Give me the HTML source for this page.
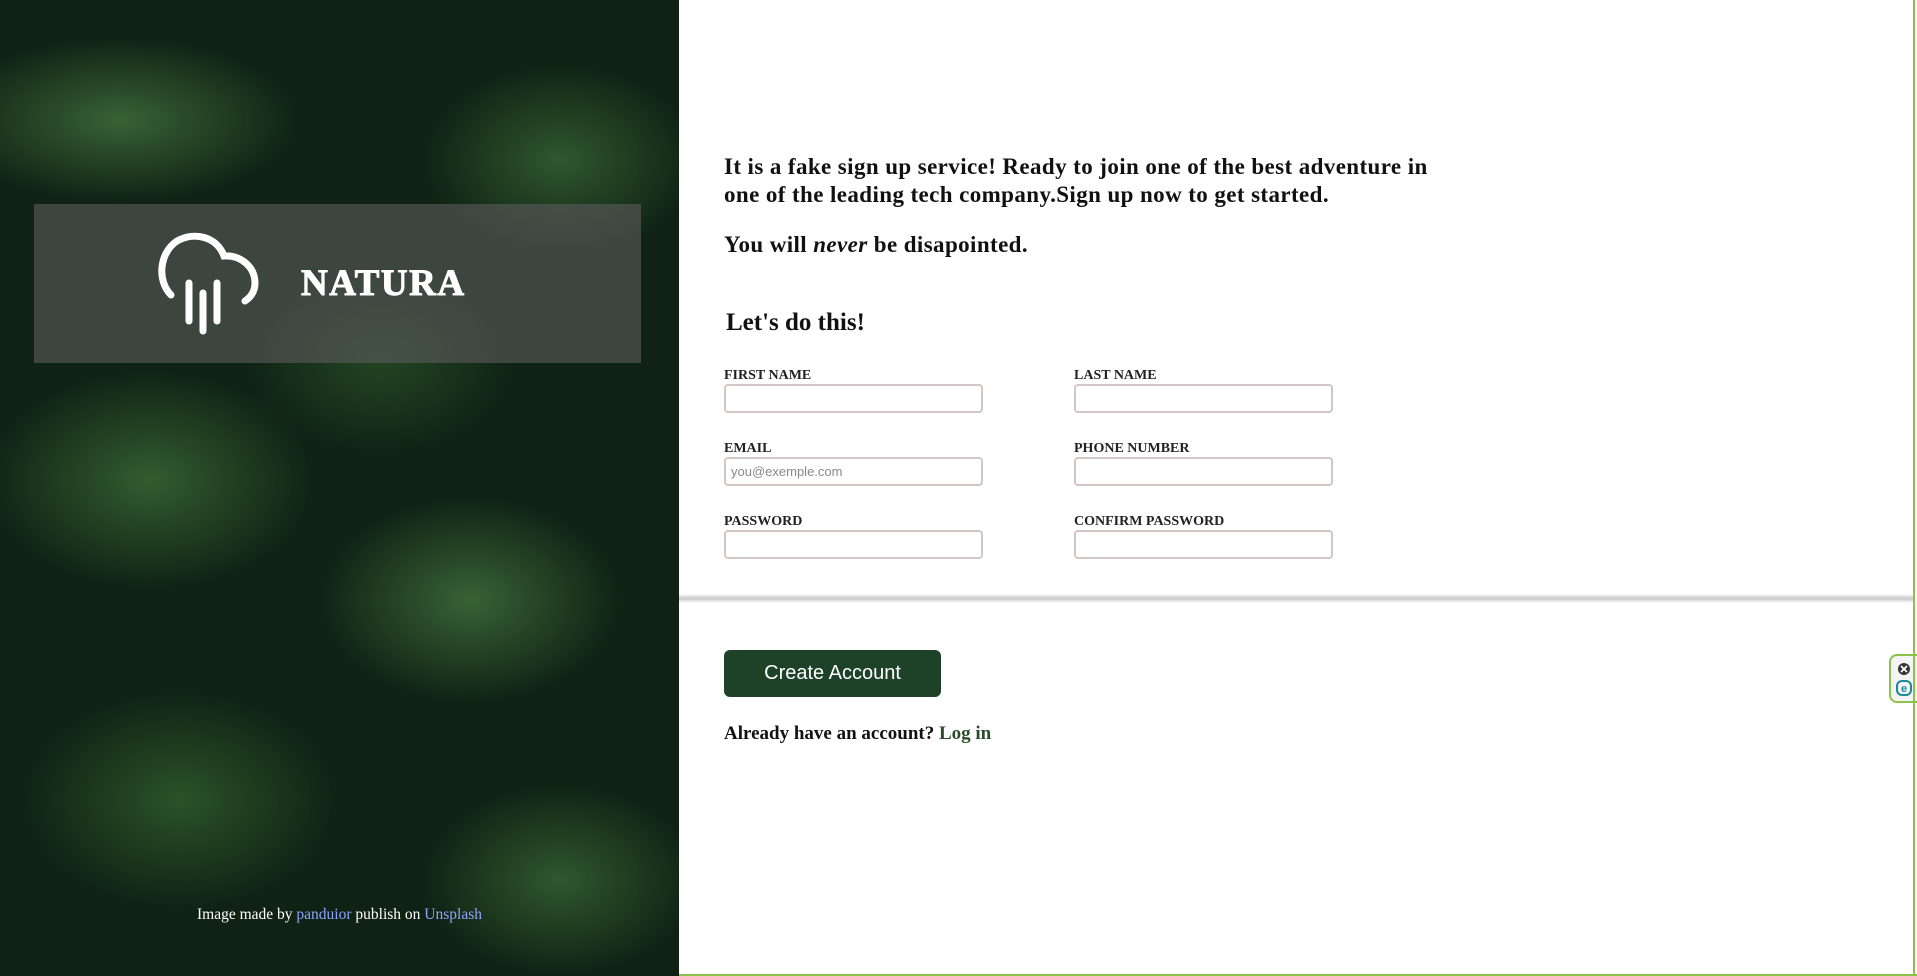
<!DOCTYPE html>
<html><head><meta charset="utf-8"><style>
*{margin:0;padding:0;box-sizing:border-box}
html,body{width:1917px;height:976px;overflow:hidden;background:#fff;font-family:"Liberation Serif",serif}
.left{position:absolute;left:0;top:0;width:679px;height:976px;
background:
radial-gradient(ellipse 260px 120px at 120px 120px,rgba(90,150,80,.55),transparent 70%),
radial-gradient(ellipse 200px 140px at 560px 160px,rgba(80,140,70,.5),transparent 70%),
radial-gradient(ellipse 240px 160px at 150px 480px,rgba(80,140,70,.55),transparent 70%),
radial-gradient(ellipse 220px 150px at 470px 600px,rgba(90,150,80,.55),transparent 70%),
radial-gradient(ellipse 230px 160px at 180px 800px,rgba(70,130,60,.5),transparent 70%),
radial-gradient(ellipse 200px 140px at 560px 880px,rgba(80,140,70,.5),transparent 70%),
radial-gradient(ellipse 200px 140px at 380px 360px,rgba(60,110,55,.45),transparent 70%),
#0f2214;}
.logo{position:absolute;left:34px;top:204px;width:607px;height:159px;background:rgba(90,90,90,.62)}
.nat{position:absolute;left:267px;top:58px;color:#fff;font:bold 37px "Liberation Serif",serif;letter-spacing:1.5px;-webkit-text-stroke:1px #fff}
.credit{position:absolute;left:0;width:679px;top:906px;text-align:center;color:#fff;font-size:15.5px}
.credit a{color:#8fa4ff;text-decoration:none}
.border-r{position:absolute;left:1913px;top:0;width:2px;height:976px;background:#8bc34a}
.border-b{position:absolute;left:679px;top:974px;width:1238px;height:2px;background:#8bc34a}
.intro{position:absolute;left:724px;top:153px;font-weight:bold;font-size:23px;line-height:28px;color:#111;letter-spacing:.4px}
.never{position:absolute;left:724px;top:232px;font-weight:bold;font-size:23px;color:#111;letter-spacing:.4px}
h2{position:absolute;left:726px;top:309px;font-size:25px;font-weight:bold;color:#111}
label{position:absolute;font-size:14px;font-weight:bold;color:#222}
.in{position:absolute;width:259px;height:29px;border:2px solid #d2c6c6;border-radius:4px;background:#fff;font:13px "Liberation Sans",sans-serif;color:#888;padding:5px 5px}
.shadow{position:absolute;left:679px;top:594px;width:1234px;height:9px;background:linear-gradient(#fff,#c8c8c8 50%,#fff)}
.btn{position:absolute;left:724px;top:650px;width:217px;height:47px;background:#1e4228;border-radius:6px;color:#fff;font:20px "Liberation Sans",sans-serif;text-align:center;line-height:47px}
.already{position:absolute;left:724px;top:723px;font-weight:bold;font-size:19px;color:#111}
.already span{color:#2b4d2b}
.wid{position:absolute;left:1889px;top:654px;width:28px;height:49px;border:2px solid #8bc34a;border-right:none;border-radius:8px 0 0 8px;background:#f4f4f4}
</style></head><body>
<div class="left">
 <div class="logo">
  <svg style="position:absolute;left:123px;top:27px" width="104" height="106" viewBox="0 0 104 106">
   <path d="M14 64 C0 50 2 22 20 10 C38 0 60 6 67 25 C84 24 98 36 98 52 C98 60 94 66 88 70" fill="none" stroke="#fff" stroke-width="7" stroke-linecap="round"/>
   <line x1="32" y1="52" x2="32" y2="90" stroke="#fff" stroke-width="7" stroke-linecap="round"/>
   <line x1="46" y1="62" x2="46" y2="100" stroke="#fff" stroke-width="7" stroke-linecap="round"/>
   <line x1="60" y1="52" x2="60" y2="90" stroke="#fff" stroke-width="7" stroke-linecap="round"/>
  </svg>
  <div class="nat">NATURA</div>
 </div>
 <div class="credit">Image made by <a>panduior</a> publish on <a>Unsplash</a></div>
</div>
<div class="intro">It is a fake sign up service! Ready to join one of the best adventure in<br>one of the leading tech company.Sign up now to get started.</div>
<div class="never">You will <i>never</i> be disapointed.</div>
<h2>Let's do this!</h2>
<label style="left:724px;top:368px">FIRST NAME</label>
<div class="in" style="left:724px;top:384px"></div>
<label style="left:1074px;top:368px">LAST NAME</label>
<div class="in" style="left:1074px;top:384px"></div>
<label style="left:724px;top:441px">EMAIL</label>
<div class="in" style="left:724px;top:457px">you@exemple.com</div>
<label style="left:1074px;top:441px">PHONE NUMBER</label>
<div class="in" style="left:1074px;top:457px"></div>
<label style="left:724px;top:514px">PASSWORD</label>
<div class="in" style="left:724px;top:530px"></div>
<label style="left:1074px;top:514px">CONFIRM PASSWORD</label>
<div class="in" style="left:1074px;top:530px"></div>
<div class="shadow"></div>
<div class="btn">Create Account</div>
<div class="already">Already have an account? <span>Log in</span></div>
<div class="wid">
 <svg width="26" height="46" viewBox="0 0 26 46"><circle cx="13" cy="13" r="6" fill="#333"/><path d="M10 10l6 6M16 10l-6 6" stroke="#fff" stroke-width="1.8"/><rect x="6" y="25" width="14" height="14" rx="5" fill="none" stroke="#1a8a9a" stroke-width="2"/><text x="13" y="36" font-size="11" font-family="Liberation Sans" font-weight="bold" fill="#1a8a9a" text-anchor="middle">e</text></svg>
</div>
<div class="border-r"></div><div class="border-b"></div>
</body></html>
